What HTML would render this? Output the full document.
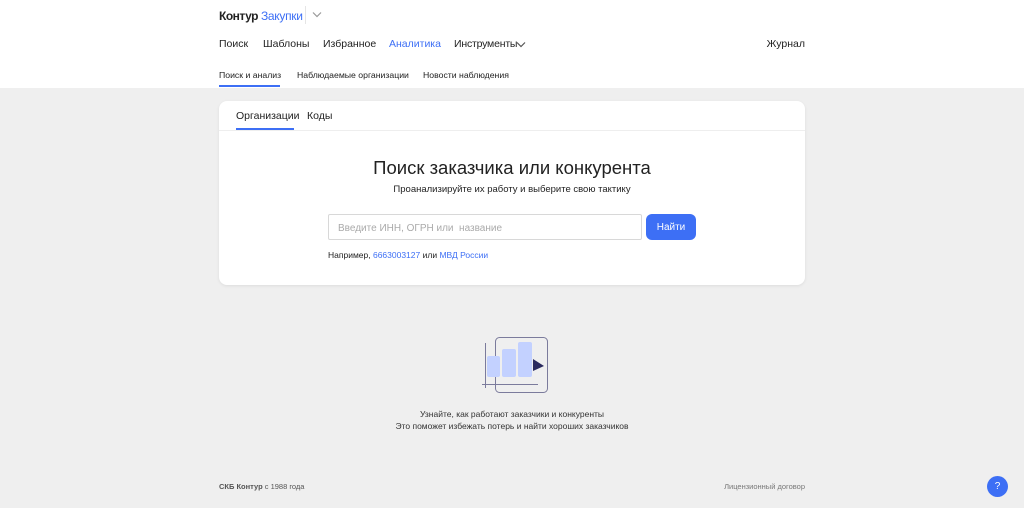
<!DOCTYPE html>
<html><head><meta charset="utf-8"><style>
*{margin:0;padding:0;box-sizing:border-box}
body{width:1024px;height:508px;background:#efefef;font-family:"Liberation Sans",sans-serif;color:#222;position:relative;overflow:hidden}
.hdr{position:absolute;left:0;top:0;width:1024px;height:88px;background:#fff}
.a{position:absolute;white-space:nowrap}
.card{position:absolute;left:219px;top:101px;width:586px;height:184px;background:#fff;border-radius:8px;box-shadow:0 1px 3px rgba(0,0,0,.08)}
</style></head><body>
<div class="hdr">
 <div class="a" style="left:219px;top:9px;font-size:12px;font-weight:bold;letter-spacing:-0.5px">Контур<span style="color:#3d6ff5;font-weight:normal;letter-spacing:-0.3px">&nbsp;Закупки</span></div>
 <div class="a" style="left:305px;top:6px;width:1px;height:18px;background:#e5e5e5"></div>
 <svg class="a" style="left:312px;top:11px" width="10" height="7"><path d="M1 1.5l4 4 4-4" stroke="#999" fill="none" stroke-width="1.2"/></svg>
 <div class="a" style="left:219px;top:38px;font-size:10.5px">Поиск</div>
 <div class="a" style="left:263px;top:38px;font-size:10.5px">Шаблоны</div>
 <div class="a" style="left:323px;top:38px;font-size:10.5px">Избранное</div>
 <div class="a" style="left:389px;top:38px;font-size:10.5px;color:#3d6ff5">Аналитика</div>
 <div class="a" style="left:454px;top:38px;font-size:10.5px;letter-spacing:-0.2px">Инструменты</div>
 <svg class="a" style="left:516px;top:41px" width="10" height="7"><path d="M1 1.5l4 4 4-4" stroke="#555" fill="none" stroke-width="1.2"/></svg>
 <div class="a" style="right:219px;top:38px;font-size:10.5px">Журнал</div>
 <div class="a" style="left:219px;top:70px;font-size:8.7px">Поиск и анализ</div>
 <div class="a" style="left:219px;top:85px;width:61px;height:2px;background:#3d6ff5"></div>
 <div class="a" style="left:297px;top:70px;font-size:8.7px">Наблюдаемые организации</div>
 <div class="a" style="left:423px;top:70px;font-size:8.7px">Новости наблюдения</div>
</div>
<div class="card">
 <div class="a" style="left:17px;top:9px;font-size:10.5px">Организации</div>
 <div class="a" style="left:17px;top:27px;width:58px;height:2px;background:#3d6ff5"></div>
 <div class="a" style="left:88px;top:9px;font-size:10.5px">Коды</div>
 <div class="a" style="left:0;top:29px;width:586px;height:1px;background:#eee"></div>
 <div class="a" style="left:0;width:586px;text-align:center;top:56px;font-size:18.5px">Поиск заказчика или конкурента</div>
 <div class="a" style="left:0;width:586px;text-align:center;top:83px;font-size:9.5px">Проанализируйте их работу и выберите свою тактику</div>
 <div class="a" style="left:109px;top:113px;width:314px;height:26px;border:1px solid #d8d8d8;border-radius:2px;font-size:10px;color:#aaa;padding:8px 0 0 9px">Введите ИНН, ОГРН или&nbsp; название</div>
 <div class="a" style="left:427px;top:113px;width:50px;height:26px;background:#3d6ff5;border-radius:6px;color:#fff;font-size:10px;text-align:center;line-height:28px">Найти</div>
 <div class="a" style="left:109px;top:149px;font-size:8.5px">Например, <span style="color:#3d6ff5">6663003127</span> или <span style="color:#3d6ff5">МВД России</span></div>
</div>
<svg class="a" style="left:478px;top:334px" width="76" height="64">
 <rect x="17.5" y="3.5" width="52" height="55" rx="4" fill="none" stroke="#7b7b9c" stroke-width="1"/>
 <rect x="9" y="22" width="13" height="21" rx="2" fill="#c3d1ff"/>
 <rect x="24" y="15" width="14" height="28" rx="2" fill="#c3d1ff"/>
 <rect x="40" y="8" width="14" height="35" rx="2" fill="#c3d1ff"/>
 <line x1="7.5" y1="9" x2="7.5" y2="54" stroke="#7b7b9c"/>
 <line x1="4" y1="50.5" x2="60" y2="50.5" stroke="#7b7b9c"/>
 <path d="M55 25l11 7-11 5z" fill="#2a2a5e"/>
</svg>
<div class="a" style="left:0;width:1024px;text-align:center;top:409px;font-size:8.5px;color:#333">Узнайте, как работают заказчики и конкуренты</div>
<div class="a" style="left:0;width:1024px;text-align:center;top:421px;font-size:8.5px;color:#333">Это поможет избежать потерь и найти хороших заказчиков</div>
<div class="a" style="left:219px;top:482px;font-size:7.5px;color:#555"><b>СКБ Контур</b> с 1988 года</div>
<div class="a" style="right:219px;top:482px;font-size:7.5px;color:#777">Лицензионный договор</div>
<div class="a" style="left:987px;top:476px;width:21px;height:21px;border-radius:50%;background:#3d6ff5;color:#fff;font-size:10px;text-align:center;line-height:21px">?</div>
</body></html>
